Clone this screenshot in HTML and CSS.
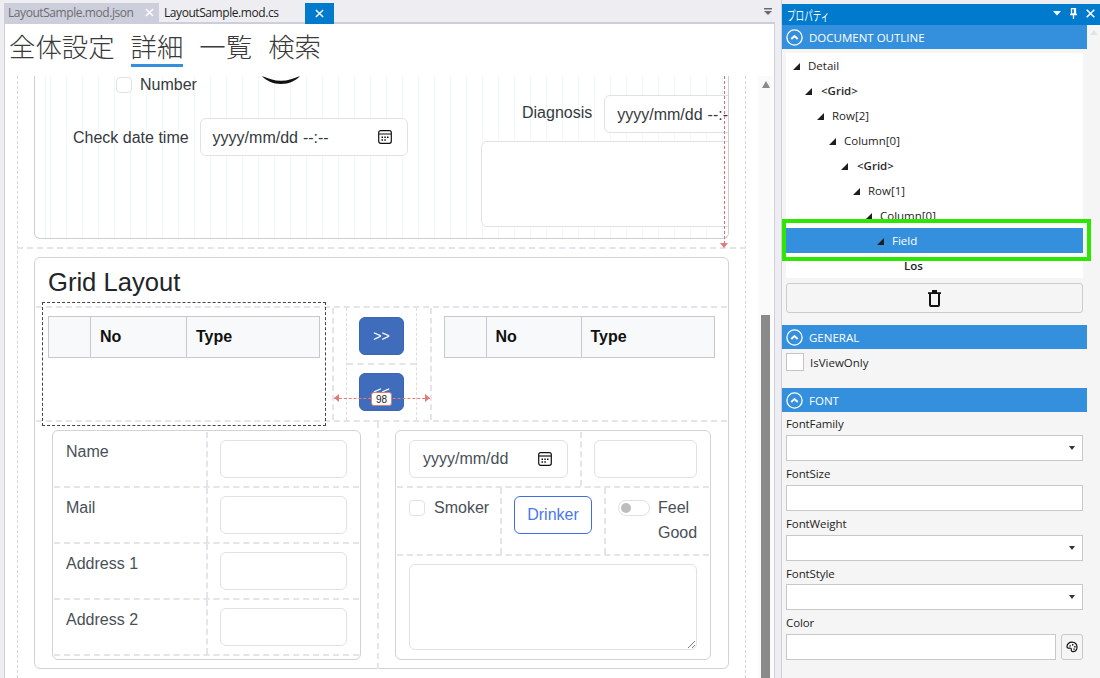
FILE: index.html
```html
<!DOCTYPE html>
<html>
  <head>
    <meta charset="UTF-8" />
    <title>LayoutSample.mod.json</title>
    <link rel="stylesheet" href="styles.css">
  </head>
  <body>
    <div class="app">
      <div class="doc">
        <div class="tabs">
          <div class="tab tab-inactive">
            <span>LayoutSample.mod.json</span>
            <svg class="tab-x" viewBox="0 0 10 10"><path d="M1 1l8 8M9 1l-8 8" /></svg>
          </div>
          <div class="tab tab-plain"><span>LayoutSample.mod.cs</span></div>
          <div class="tab tab-active">
            <svg class="tab-x" viewBox="0 0 10 10"><path d="M1 1l8 8M9 1l-8 8" /></svg>
          </div>
          <svg class="tab-menu" viewBox="0 0 8 7"><path d="M0 0h8v1.500H0zM0 3h8L4 7z" /></svg>
        </div>

        <div class="doc-body">
          <nav class="nav">
            <a class="nav-link">全体設定</a>
            <a class="nav-link nav-link-on">詳細</a>
            <a class="nav-link">一覧</a>
            <a class="nav-link">検索</a>
          </nav>

          <div class="scroller">
            <div class="canvas">
              <div class="layout">
                <div class="upper">
                  <div class="upper-card">
                    <div class="upper-left">
                      <div class="number-row">
                        <span class="check"></span>
                        <span class="number-label">Number</span>
                        <svg class="smile" viewBox="0 0 38 8"><path d="M0 0c6 2.500 12 4.800 19 4.800S32 2.500 38 0c-4 4.500-11 8-19 8S4 4.500 0 0z" /></svg>
                      </div>
                      <div class="date-row">
                        <label class="field-label">Check date time</label>
                        <div class="input date-input">
                          <span>yyyy/mm/dd --:--</span>
                          <svg class="cal" viewBox="0 0 14 14"><rect x="0.700" y="0.700" width="12.600" height="12.600" rx="2" /><path d="M1 4h12" /><path class="cal-dots" d="M3.500 6.500h1.500v1.500H3.500zM6.300 6.500h1.500v1.500H6.300zM9 6.500h1.500v1.500H9zM3.500 9.300h1.500v1.500H3.500zM6.300 9.300h1.500v1.500H6.300z" /></svg>
                        </div>
                      </div>
                    </div>
                    <div class="upper-right">
                      <div class="diag-row">
                        <label class="field-label">Diagnosis</label>
                        <div class="input diag-input"><span>yyyy/mm/dd --:--</span></div>
                      </div>
                      <div class="input diag-area"></div>
                    </div>
                  </div>
                  <div class="height-line"></div>
                </div>

                <div class="card">
                  <h2 class="card-title">Grid Layout</h2>

                  <div class="grid-top">
                    <div class="list-cell">
                      <table class="list-table">
                        <tr><th class="col-sel"></th><th class="col-no">No</th><th>Type</th></tr>
                      </table>
                    </div>
                    <div class="move-cell">
                      <div class="move-col">
                        <div class="move-row"><button class="move-btn">&gt;&gt;</button></div>
                        <div class="move-row"><button class="move-btn">&lt;&lt;</button></div>
                      </div>
                      <div class="width-line">
                        <span class="width-arrow width-arrow-l"></span>
                        <span class="width-badge">98</span>
                        <span class="width-arrow width-arrow-r"></span>
                      </div>
                    </div>
                    <div class="list-cell">
                      <table class="list-table list-table-r">
                        <tr><th class="col-sel"></th><th class="col-no">No</th><th>Type</th></tr>
                      </table>
                    </div>
                    <div class="selection"></div>
                  </div>

                  <div class="grid-bottom">
                    <div class="pane">
                      <div class="sub-card">
                        <div class="name-row"><div class="name-label">Name</div><div class="name-value"><div class="input"></div></div></div>
                        <div class="name-row"><div class="name-label">Mail</div><div class="name-value"><div class="input"></div></div></div>
                        <div class="name-row"><div class="name-label">Address 1</div><div class="name-value"><div class="input"></div></div></div>
                        <div class="name-row"><div class="name-label">Address 2</div><div class="name-value"><div class="input"></div></div></div>
                      </div>
                    </div>
                    <div class="pane pane-r">
                      <div class="sub-card">
                        <div class="date-line">
                          <div class="date-cell">
                            <div class="input date-small">
                              <span>yyyy/mm/dd</span>
                              <svg class="cal" viewBox="0 0 14 14"><rect x="0.700" y="0.700" width="12.600" height="12.600" rx="2" /><path d="M1 4h12" /><path class="cal-dots" d="M3.500 6.500h1.500v1.500H3.500zM6.300 6.500h1.500v1.500H6.300zM9 6.500h1.500v1.500H9zM3.500 9.300h1.500v1.500H3.500zM6.300 9.300h1.500v1.500H6.300z" /></svg>
                            </div>
                          </div>
                          <div class="side-cell"><div class="input"></div></div>
                        </div>
                        <div class="flags-line">
                          <div class="flag-cell">
                            <span class="check"></span>
                            <span class="flag-text">Smoker</span>
                          </div>
                          <div class="flag-cell flag-btn-cell">
                            <button class="drinker">Drinker</button>
                          </div>
                          <div class="flag-cell flag-last">
                            <span class="toggle"><span class="toggle-knob"></span></span>
                            <span class="flag-text flag-wrap">Feel Good</span>
                          </div>
                        </div>
                        <div class="area-line">
                          <div class="input text-area">
                            <svg class="grip" viewBox="0 0 8 8"><path d="M1 8l7-7M5 8l3-3" /></svg>
                          </div>
                        </div>
                      </div>
                    </div>
                  </div>
                </div>
              </div>
            </div>
            <div class="scrollbar">
              <span class="scroll-up"></span>
              <div class="scroll-thumb"></div>
            </div>
          </div>
        </div>
      </div>

      <aside class="panel">
        <div class="panel-title">
          <span class="panel-name">プロパティ</span>
          <span class="panel-grip"></span>
          <svg class="panel-ico ico-down" viewBox="0 0 8 5"><path class="solid" d="M0 0h8L4 4.500z" /></svg>
          <svg class="panel-ico ico-pin" viewBox="0 0 7 11"><path d="M1.500 .7h4v5.300h-4zM0 6.500h7M3.500 7v4M4.500 .7v5.300" /></svg>
          <svg class="panel-ico ico-x" viewBox="0 0 9 9"><path d="M.7 .7l7.600 7.600M8.300 .7L.7 8.300" /></svg>
        </div>

        <div class="panel-scroll">
          <div class="panel-main">
            <div class="section-head">
              <svg class="chev" viewBox="0 0 17 17"><circle cx="8.500" cy="8.500" r="7.600" /><path class="chev-mark" d="M5.300 10l3.200-3 3.200 3" /></svg>
              <span>DOCUMENT OUTLINE</span>
            </div>
            <div class="outline">
              <div class="tree-row depth-0"><i class="tri"></i>Detail</div>
              <div class="tree-row depth-1 tree-tag"><i class="tri"></i>&lt;Grid&gt;</div>
              <div class="tree-row depth-2"><i class="tri"></i>Row[2]</div>
              <div class="tree-row depth-3"><i class="tri"></i>Column[0]</div>
              <div class="tree-row depth-4 tree-tag"><i class="tri"></i>&lt;Grid&gt;</div>
              <div class="tree-row depth-5"><i class="tri"></i>Row[1]</div>
              <div class="tree-row depth-6"><i class="tri"></i>Column[0]</div>
              <div class="tree-row depth-7 tree-on"><i class="tri"></i>Field</div>
              <div class="tree-row depth-8 tree-bold">Los</div>
            </div>
            <button class="trash-btn">
              <svg class="trash" viewBox="0 0 13 17"><path d="M4 0h5v2.200H4zM0 2.200h13v1.800H0z" /><path class="trash-body" d="M2 4v11c0 .6.400 1 1 1h7c.6 0 1-.4 1-1V4" /></svg>
            </button>

            <div class="section-head section-general">
              <svg class="chev" viewBox="0 0 17 17"><circle cx="8.500" cy="8.500" r="7.600" /><path class="chev-mark" d="M5.300 10l3.200-3 3.200 3" /></svg>
              <span>GENERAL</span>
            </div>
            <div class="view-only"><span class="box"></span><span>IsViewOnly</span></div>

            <div class="section-head section-font">
              <svg class="chev" viewBox="0 0 17 17"><circle cx="8.500" cy="8.500" r="7.600" /><path class="chev-mark" d="M5.300 10l3.200-3 3.200 3" /></svg>
              <span>FONT</span>
            </div>
            <div class="props">
              <label class="prop-label">FontFamily</label>
              <div class="prop-box prop-combo"><i class="combo-arrow"></i></div>
              <label class="prop-label">FontSize</label>
              <div class="prop-box"></div>
              <label class="prop-label">FontWeight</label>
              <div class="prop-box prop-combo"><i class="combo-arrow"></i></div>
              <label class="prop-label">FontStyle</label>
              <div class="prop-box prop-combo"><i class="combo-arrow"></i></div>
              <label class="prop-label">Color</label>
              <div class="color-row">
                <div class="prop-box color-box"></div>
                <button class="palette-btn">
                  <svg class="palette" viewBox="0 0 12 12"><path d="M6 1.200C3 1.200 1 3.200 1 5.600c0 1.500 1.200 1.700 2.500 1.500 1.300-.2 2 .4 1.800 1.500-.2 1.300.6 2.100 1.900 2 2.300-.2 3.800-2.300 3.800-4.600 0-2.800-2-4.800-5-4.800z" /><path class="palette-dots" d="M3.400 4.200h1.400v1.400H3.400zM6 3h1.400v1.400H6zM8.200 5h1.400v1.400H8.200zM7.400 7.400h1.400v1.400H7.400z" /></svg>
                </button>
              </div>
            </div>
          </div>
          <div class="panel-scrollbar"><span class="panel-up"></span></div>
        </div>
        <div class="outline-mark"></div>
      </aside>
    </div>
  </body>
</html>
```

FILE: styles.css
```css
* {
  box-sizing: border-box;
}

html,
body {
  margin: 0;
  height: 678px;
  overflow: hidden;
}

body {
  font-family: "Liberation Sans", Arial, sans-serif;
  font-size: 16px;
  color: #212529;
  background: #eeeef2;
}

.app {
  display: flex;
  height: 678px;
}

/* document side */
.doc {
  width: 781px;
  display: flex;
  flex-direction: column;
}

.tabs {
  height: 22px;
  padding: 3px 0 0 4px;
  display: flex;
  position: relative;
}

.tab {
  height: 19px;
  display: flex;
  align-items: center;
  font-family: "Open Sans", sans-serif;
  font-size: 12px;
  letter-spacing: -0.43px;
  white-space: nowrap;
}

.tab-inactive {
  width: 155px;
  padding: 0 5px 0 4px;
  background: #cccedb;
  color: #6d6d70;
  justify-content: space-between;
}

.tab-plain {
  width: 146px;
  padding-left: 5px;
  color: #1e1e1e;
}

.tab-active {
  width: 29px;
  height: 21px;
  background: #007acc;
  justify-content: center;
  position: relative;
  z-index: 1;
}

.tab-x {
  width: 9px;
  height: 9px;
  fill: none;
  stroke: #fff;
  stroke-width: 1.600;
}

.tab-menu {
  position: absolute;
  left: 764px;
  top: 8px;
  width: 8px;
  height: 7px;
  fill: #6a6a6a;
}

.doc-body {
  width: 771px;
  margin-left: 4px;
  flex: 1;
  min-height: 0;
  display: flex;
  flex-direction: column;
  background: #fff;
  border-top: 2px solid #cccedb;
  border-left: 1px solid #cccedb;
  border-right: 1px solid #cccedb;
}

.nav {
  height: 52px;
  flex: none;
  display: flex;
  gap: 16px;
  padding-left: 4px;
}

.nav-link {
  height: 43px;
  font-family: "Noto Sans CJK JP", sans-serif;
  font-size: 26.400px;
  font-weight: 300;
  line-height: 44px;
  color: #3a3a3a;
  border-bottom: 3px solid transparent;
}

.nav-link-on {
  border-bottom-color: #3490dc;
}

.scroller {
  flex: 1;
  min-height: 0;
  display: flex;
}

.canvas {
  flex: 1;
  min-width: 0;
  overflow: hidden;
  padding-left: 12px;
}

.layout {
  width: 729px;
  height: 602px;
  padding-left: 16px;
  border-left: 1px dashed #d8d8dc;
  border-right: 1px dashed #d8d8dc;
}

.scrollbar {
  width: 15px;
  margin-right: 1px;
  background: #fafafa;
  display: flex;
  flex-direction: column;
  align-items: center;
}

.scroll-up {
  width: 0;
  height: 0;
  margin-top: 5px;
  border-left: 4.500px solid transparent;
  border-right: 4.500px solid transparent;
  border-bottom: 7px solid #8a8a8a;
}

.scroll-thumb {
  width: 9px;
  height: 363px;
  margin-top: auto;
  background: #8a8a8a;
}

/* top part of the form, scrolled away */
.upper {
  position: relative;
  width: 729px;
  height: 173px;
  margin-left: -17px;
  padding-left: 17px;
  border-bottom: 2px dashed #e4e4e9;
}

.upper-card {
  width: 695px;
  height: 163px;
  display: flex;
  border: 1px solid #cfcfcf;
  border-top: 0;
  border-radius: 0 0 6px 6px;
  overflow: hidden;
  background: repeating-linear-gradient(90deg, #eef8f6 0, #eef8f6 1px, #fff 1px, #fff 16px) 15px 0;
}

.upper-left {
  width: 446px;
  flex: none;
}

.number-row {
  display: flex;
  padding: 1px 0 0 81px;
  height: 42px;
}

.check {
  width: 16px;
  height: 16px;
  flex: none;
  background: #fff;
  border: 1px solid #dee2e6;
  border-radius: 4px;
}

.number-label {
  margin-left: 8px;
  line-height: 16px;
  color: #343a40;
}

.smile {
  width: 38px;
  height: 8px;
  margin: -1px 0 0 65px;
  fill: #111;
}

.date-row {
  display: flex;
  align-items: center;
  gap: 11px;
  padding-left: 38px;
}

.field-label {
  color: #343a40;
}

.date-row .field-label {
  margin-top: 2px;
}

.input {
  height: 38px;
  background: #fff;
  border: 1px solid #dee2e6;
  border-radius: 6px;
}

.date-input {
  width: 208px;
  padding: 0 15px 0 12px;
  display: flex;
  align-items: center;
  justify-content: space-between;
  color: #343a40;
  word-spacing: 0.500px;
}

.date-input span {
  padding-top: 1px;
}

.cal {
  width: 14px;
  height: 14px;
  fill: none;
  stroke: #111;
  stroke-width: 1.200;
}

.cal-dots {
  fill: #111;
  stroke: none;
}

.upper-right {
  padding-top: 19px;
  width: 400px;
  flex: none;
}

.diag-row {
  display: flex;
  align-items: center;
  gap: 12px;
  padding-left: 41px;
}

.diag-row .field-label {
  margin-top: -3px;
}

.diag-input {
  width: 200px;
  flex: none;
  padding-left: 12px;
  line-height: 37px;
  white-space: nowrap;
  color: #343a40;
  word-spacing: 0.500px;
}

.diag-area {
  width: 300px;
  height: 86px;
  margin-top: 8px;
}

.height-line {
  position: absolute;
  left: 707px;
  top: 0;
  height: 168px;
  border-left: 1px dashed #e06c6c;
}

.height-line::after {
  content: "";
  position: absolute;
  left: -5px;
  bottom: -4px;
  width: 0;
  height: 0;
  border-left: 4.500px solid transparent;
  border-right: 4.500px solid transparent;
  border-top: 5px solid #e07b7b;
}

/* grid layout card */
.card {
  width: 695px;
  height: 412px;
  margin-top: 8px;
  padding: 1px;
  background: #fff;
  border: 1px solid #d2d2d2;
  border-radius: 6px;
}

.card-title {
  height: 47px;
  margin: 0;
  padding-left: 12px;
  font-size: 25.600px;
  font-weight: 400;
  line-height: 47px;
  color: #212529;
}

.grid-top {
  position: relative;
  height: 116px;
  display: grid;
  grid-template-columns: 296px 100px 1fr;
  border-top: 2px dashed #e4e4e9;
  border-bottom: 2px dashed #e4e4e9;
}

.list-cell {
  padding: 8px 0 0 12px;
}

.list-table {
  width: 272px;
  height: 42px;
  border-collapse: collapse;
  table-layout: fixed;
  background: #f8f9fa;
}

.list-table-r {
  width: 271px;
}

.list-table th {
  border: 1px solid #c8c8cc;
  padding: 0 0 0 9px;
  text-align: left;
  font-size: 16px;
  color: #111;
}

.col-sel {
  width: 42px;
}

.col-no {
  width: 96px;
}

.list-table-r .col-sel {
  width: 41.500px;
}

.list-table-r .col-no {
  width: 95px;
}

.move-cell {
  position: relative;
  padding: 0 13px 0 12px;
  border-left: 2px dashed #e4e4e9;
  border-right: 2px dashed #e4e4e9;
}

.move-col {
  height: 112px;
  border-left: 1px dashed #dcdce2;
  border-right: 1px dashed #dcdce2;
}

.move-row {
  height: 55px;
  padding-top: 9px;
  text-align: center;
}

.move-row + .move-row {
  height: 57px;
  border-top: 2px dashed #e4e4e9;
  padding-top: 8px;
}

.move-btn {
  width: 45px;
  height: 38px;
  padding: 0;
  border: 1px solid #3b66b3;
  border-radius: 6px;
  background: #3f6cbb;
  color: #fff;
  font-family: "Liberation Sans", sans-serif;
  font-size: 14px;
}

.width-line {
  position: absolute;
  left: 0;
  right: 0;
  top: 90px;
  border-top: 1px dashed #e07b7b;
}

.width-badge {
  position: absolute;
  left: 37px;
  top: -7px;
  width: 21px;
  height: 14px;
  background: #fff;
  border: 1px solid #e07b7b;
  border-radius: 3px;
  font-size: 10px;
  line-height: 13px;
  text-align: center;
  color: #222;
}

.width-arrow {
  position: absolute;
  top: -5px;
  width: 0;
  height: 0;
  border-top: 4px solid transparent;
  border-bottom: 4px solid transparent;
}

.width-arrow-l {
  left: 0;
  border-right: 5px solid #e07b7b;
}

.width-arrow-r {
  right: 0;
  border-left: 5px solid #e07b7b;
}

.selection {
  position: absolute;
  left: 6px;
  top: -6px;
  width: 284px;
  height: 124px;
  border: 1px dashed #444;
}

.grid-bottom {
  display: grid;
  grid-template-columns: 341px 1fr;
  height: 247px;
}

.pane {
  padding: 8px 0 0 16px;
}

.pane-r {
  border-left: 2px dashed #e4e4e9;
}

.sub-card {
  width: 309px;
  height: 230px;
  padding: 1px;
  background: #fff;
  border: 1px solid #d2d2d2;
  border-radius: 6px;
}

.pane-r .sub-card {
  width: 316px;
}

.name-row {
  display: flex;
  height: 56px;
  border-bottom: 2px dashed #e4e4e9;
}

.name-label {
  width: 152px;
  padding: 10px 0 0 12px;
  line-height: 20px;
  color: #495057;
}

.name-value {
  flex: 1;
  padding: 8px 12px 0 12px;
  border-left: 2px dashed #e4e4e9;
}

.date-line {
  display: flex;
  height: 56px;
  border-bottom: 2px dashed #e4e4e9;
}

.date-cell {
  width: 183px;
  padding: 8px 0 0 12px;
}

.date-small {
  width: 159px;
  padding: 0 15px 0 13px;
  display: flex;
  align-items: center;
  justify-content: space-between;
  color: #495057;
}

.side-cell {
  flex: 1;
  padding: 8px 12px 0 12px;
  border-left: 2px dashed #e4e4e9;
}

.flags-line {
  display: flex;
  height: 68px;
  border-bottom: 2px dashed #e4e4e9;
}

.flag-cell {
  width: 103px;
  display: flex;
  align-items: flex-start;
  padding: 12px 0 0 12px;
}

.flag-cell + .flag-cell {
  width: 104px;
  border-left: 2px dashed #e4e4e9;
}

.flag-cell + .flag-last {
  width: 105px;
}

.flag-btn-cell {
  padding-top: 8px;
}

.flag-text {
  margin-left: 9px;
  line-height: 16px;
  color: #495057;
}

.flag-wrap {
  line-height: 25px;
  margin-top: -5px;
  margin-left: 8px;
}

.drinker {
  width: 78px;
  height: 38px;
  padding: 0;
  background: #fff;
  border: 1px solid #3d6ee8;
  border-radius: 6px;
  color: #4a78e8;
  font-family: "Liberation Sans", sans-serif;
  font-size: 16px;
}

.toggle {
  width: 32px;
  height: 16px;
  flex: none;
  padding: 2px;
  background: #fff;
  border: 1px solid #dee2e6;
  border-radius: 8px;
}

.toggle-knob {
  display: block;
  width: 10px;
  height: 10px;
  background: #bdbdbd;
  border-radius: 50%;
}

.area-line {
  padding: 8px 0 0 12px;
}

.text-area {
  position: relative;
  width: 288px;
  height: 86px;
}

.grip {
  position: absolute;
  right: 1px;
  bottom: 1px;
  width: 8px;
  height: 8px;
  fill: none;
  stroke: #555;
  stroke-width: 0.800;
}

/* properties panel */
.panel {
  position: relative;
  flex: 1;
  display: flex;
  flex-direction: column;
  padding-top: 4px;
  border-left: 1px solid #cccedb;
  font-family: "Open Sans", sans-serif;
  font-size: 11.500px;
  color: #1e1e1e;
}

.panel-title {
  height: 21px;
  flex: none;
  display: flex;
  align-items: center;
  padding: 0 5px 0 5px;
  background: #007acc;
  color: #fff;
}

.panel-name {
  width: 50px;
  font-family: "Noto Sans CJK JP", sans-serif;
  font-size: 13px;
  white-space: nowrap;
  transform: scaleX(0.660);
  transform-origin: left center;
}

.panel-grip {
  flex: 1;
  height: 5px;
  margin-right: 7px;
  background-image: radial-gradient(#59a8e0 0.600px, transparent 0.700px);
  background-size: 2px 2px;
}

.panel-ico {
  margin: -2px 0 0 9px;
  fill: none;
  stroke: #fff;
  stroke-width: 1.300;
}

.ico-down {
  width: 8px;
  height: 5px;
  margin-left: 0;
}

.ico-pin {
  width: 7px;
  height: 11px;
}

.ico-x {
  width: 9px;
  height: 9px;
  stroke-width: 1.600;
}

.solid {
  fill: #fff;
  stroke: none;
}

.panel-scroll {
  flex: 1;
  display: flex;
  background: #f5f5f5;
  min-height: 0;
}

.panel-main {
  width: 305px;
  flex: none;
}

.panel-scrollbar {
  flex: 1;
  display: flex;
  justify-content: center;
  padding-top: 5px;
}

.panel-up {
  width: 0;
  height: 0;
  border-left: 4px solid transparent;
  border-right: 4px solid transparent;
  border-bottom: 5px solid #e4e4e4;
}

.section-head {
  height: 24px;
  display: flex;
  align-items: center;
  gap: 6px;
  padding-left: 4px;
  background: #3490dc;
  color: #fff;
  font-size: 11.500px;
}

.chev {
  width: 17px;
  height: 17px;
  fill: none;
  stroke: #fff;
  stroke-width: 1.300;
}

.chev-mark {
  stroke-width: 2;
}

.outline {
  height: 225px;
  margin: 4px 4px 0;
  background: #fff;
}

.tree-row {
  height: 25px;
  display: flex;
  align-items: center;
  gap: 8px;
  white-space: nowrap;
  overflow: hidden;
}

.tri {
  width: 0;
  height: 0;
  flex: none;
  margin-top: 1px;
  border-left: 7px solid transparent;
  border-bottom: 7px solid #1e1e1e;
}

.tree-tag {
  font-weight: 600;
  gap: 9px;
  color: #2a2a2a;
}

.tree-bold {
  font-weight: 600;
}

.tree-on {
  background: #3490dc;
  color: #fff;
}

.depth-0 { padding-left: 7px; }
.depth-1 { padding-left: 19px; }
.depth-2 { padding-left: 31px; }
.depth-3 { padding-left: 43px; }
.depth-4 { padding-left: 55px; }
.depth-5 { padding-left: 67px; }
.depth-6 { padding-left: 79px; }
.depth-7 { padding-left: 91px; }
.depth-8 { padding-left: 118px; }

.trash-btn {
  display: flex;
  align-items: center;
  justify-content: center;
  width: 297px;
  height: 30px;
  margin: 5px 4px 0;
  padding: 0;
  background: #f5f5f5;
  border: 1px solid #cccccc;
  border-radius: 3px;
}

.trash {
  width: 13px;
  height: 17px;
  fill: #111;
  stroke: none;
}

.trash-body {
  fill: none;
  stroke: #111;
  stroke-width: 2;
}

.section-general {
  margin-top: 12px;
}

.view-only {
  display: flex;
  align-items: center;
  gap: 6px;
  height: 39px;
  padding: 0 0 13px 4px;
}

.box {
  width: 18px;
  height: 18px;
  background: #fff;
  border: 1px solid #c4c4c4;
}

.props {
  margin-top: -0.800px;
  padding: 0 4px;
}

.prop-label {
  display: block;
  height: 23.800px;
  line-height: 26px;
  letter-spacing: -0.100px;
}

.prop-box {
  position: relative;
  height: 26px;
  background: #fff;
  border: 1px solid #c8c8c8;
}

.combo-arrow {
  position: absolute;
  right: 7px;
  top: 10px;
  width: 0;
  height: 0;
  border-left: 3.500px solid transparent;
  border-right: 3.500px solid transparent;
  border-top: 4px solid #333;
}

.color-row {
  display: flex;
  gap: 5px;
}

.color-box {
  width: 270px;
}

.palette-btn {
  display: flex;
  align-items: center;
  justify-content: center;
  width: 22px;
  height: 26px;
  padding: 0;
  background: #f5f5f5;
  border: 1px solid #c8c8c8;
  border-radius: 3px;
}

.palette {
  width: 12px;
  height: 12px;
  fill: none;
  stroke: #111;
  stroke-width: 1.200;
}

.palette-dots {
  fill: #111;
  stroke: none;
}

.outline-mark {
  position: absolute;
  left: 0;
  top: 219px;
  width: 309px;
  height: 42px;
  border: 4px solid #2ee600;
}
```
